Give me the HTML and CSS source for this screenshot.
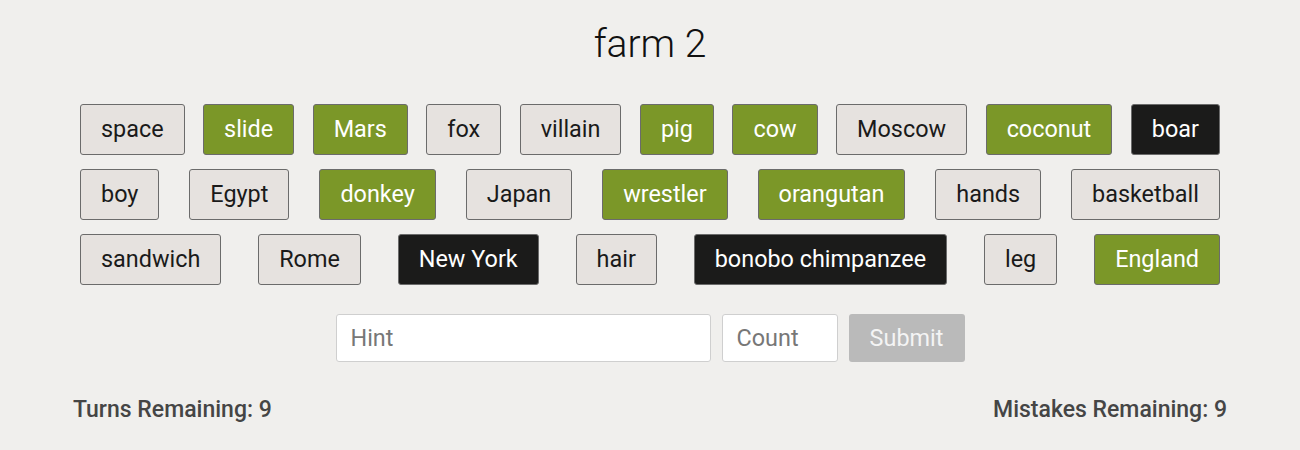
FILE: index.html
```html
<!DOCTYPE html>
<html>
<head>
<meta charset="utf-8">
<link rel="stylesheet" href="styles.css">
</head>
<body>
<div class="page">
  <h1 class="title">farm 2</h1>
  <div class="board">
    <div class="row">
      <div class="tile">space</div>
      <div class="tile green">slide</div>
      <div class="tile green">Mars</div>
      <div class="tile">fox</div>
      <div class="tile">villain</div>
      <div class="tile green">pig</div>
      <div class="tile green">cow</div>
      <div class="tile">Moscow</div>
      <div class="tile green">coconut</div>
      <div class="tile black">boar</div>
    </div>
    <div class="row">
      <div class="tile">boy</div>
      <div class="tile">Egypt</div>
      <div class="tile green">donkey</div>
      <div class="tile">Japan</div>
      <div class="tile green">wrestler</div>
      <div class="tile green">orangutan</div>
      <div class="tile">hands</div>
      <div class="tile">basketball</div>
    </div>
    <div class="row">
      <div class="tile">sandwich</div>
      <div class="tile">Rome</div>
      <div class="tile black">New York</div>
      <div class="tile">hair</div>
      <div class="tile black">bonobo chimpanzee</div>
      <div class="tile">leg</div>
      <div class="tile green">England</div>
    </div>
  </div>
  <form class="hint-form">
    <input class="hint" type="text" placeholder="Hint">
    <input class="count" type="text" placeholder="Count">
    <button class="submit" type="button">Submit</button>
  </form>
  <div class="status">
    <span>Turns Remaining: 9</span>
    <span>Mistakes Remaining: 9</span>
  </div>
</div>
</body>
</html>
```
FILE: styles.css
```css
html, body {
  margin: 0;
  padding: 0;
  background: #f0efed;
  font-family: Roboto, "Noto Sans", sans-serif;
}
.page {
  width: 1154px;
  margin: 0 auto;
  padding-top: 22px;
}
.title {
  margin: 0;
  text-align: center;
  font-weight: 300;
  font-size: 39px;
  line-height: 44px;
  color: #111;
}
.board {
  margin: 38px 7px 0;
  display: flex;
  flex-direction: column;
  gap: 14.5px;
}
.row {
  display: flex;
  justify-content: space-between;
}
.tile {
  box-sizing: border-box;
  height: 50.5px;
  padding: 0 20px;
  border: 1px solid #6b6b6b;
  border-radius: 3px;
  background: #e6e2df;
  color: #1a1a1a;
  font-size: 23.4px;
  line-height: 48.5px;
  white-space: nowrap;
}
.tile.green {
  background: #7b9728;
  color: #fff;
}
.tile.black {
  background: #1b1b1a;
  color: #fff;
}
.hint-form {
  margin-top: 29px;
  display: flex;
  justify-content: center;
  gap: 11px;
}
.hint-form input, .hint-form button {
  box-sizing: border-box;
  height: 48px;
  border-radius: 3px;
  font-family: Roboto, "Noto Sans", sans-serif;
  font-size: 23.4px;
  margin: 0;
}
.hint-form input {
  border: 1px solid #cfcfcf;
  background: #fff;
  padding: 0 14px;
  color: #222;
}
.hint-form input::placeholder {
  color: #777;
}
.hint {
  width: 375px;
}
.count {
  width: 116px;
}
.submit {
  width: 116px;
  border: none;
  background: #bababa;
  color: #f4f4f4;
}
.status {
  margin-top: 34px;
  display: flex;
  justify-content: space-between;
  font-size: 23px;
  font-weight: 500;
  color: #454545;
}
```
